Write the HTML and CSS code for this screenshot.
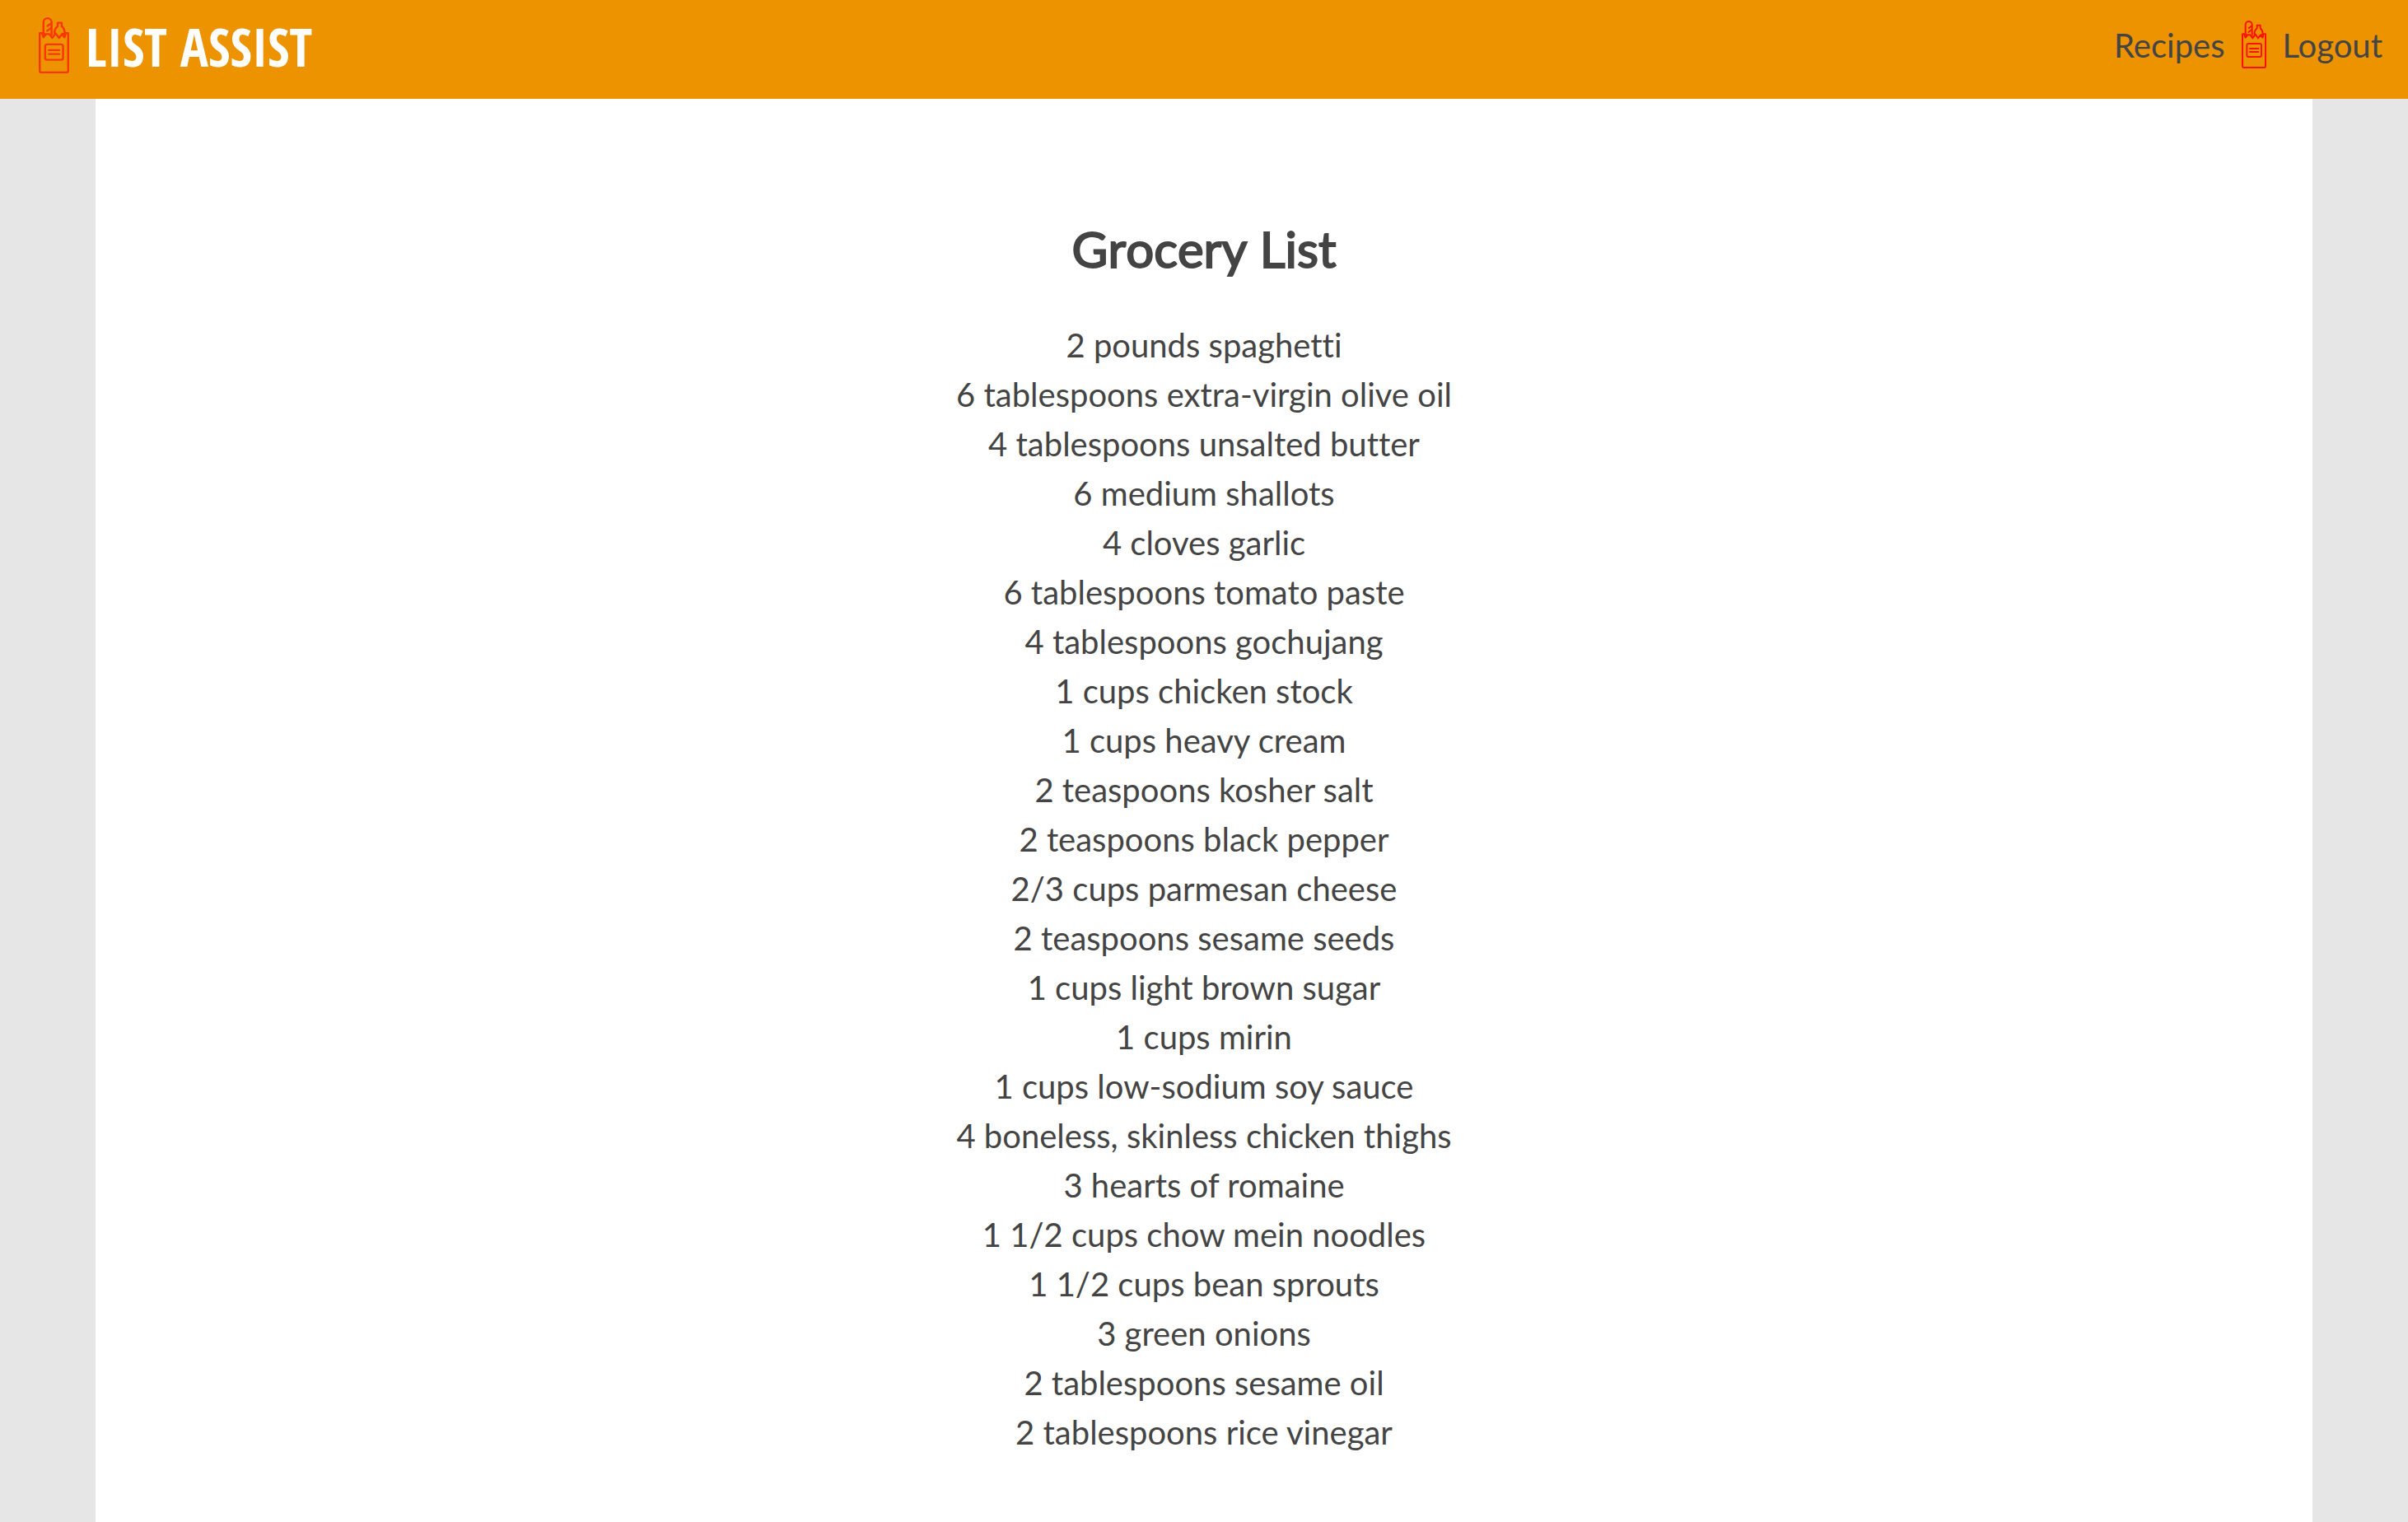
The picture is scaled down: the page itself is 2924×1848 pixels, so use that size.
FILE: index.html
```html
<!DOCTYPE html>
<html lang="en">
<head>
<meta charset="utf-8">
<title>List Assist</title>
<link rel="stylesheet" href="styles.css">
</head>
<body>
<svg class="sprite" aria-hidden="true">
  <symbol id="bag" viewBox="0 0 90 174" preserveAspectRatio="none">
    <g fill="none" stroke="currentColor" stroke-width="6" stroke-linejoin="round" stroke-linecap="round">
      <path d="M14 50V15a12 12 0 0 1 24 0V54"/>
      <path d="M26 27L37 19M25 42L37 33"/>
      <path d="M56 28V17H68V28M56 28C48 34 46 42 47 50M68 28C76 34 77 42 77 50"/>
      <path d="M3 49V167a4 4 0 0 0 4 4H83a4 4 0 0 0 4-4V49H79L76 62L69 52L60 64L50 50L40 64L31 52L22 52L14 62L10 49Z"/>
      <path d="M11 51H17L14 60ZM73 51H79L76 60Z"/>
      <rect x="19" y="84" width="53" height="48" rx="6"/>
      <path d="M30 102H61M30 114H61"/>
    </g>
  </symbol>
</svg>
<header class="header">
  <a class="brand" href="#">
    <svg class="brand-icon" aria-hidden="true"><use href="#bag"/></svg>
    <span class="brand-name">LIST ASSIST</span>
  </a>
  <nav class="nav">
    <a href="#">Recipes</a>
    <svg class="nav-icon" aria-hidden="true"><use href="#bag"/></svg>
    <a href="#">Logout</a>
  </nav>
</header>
<main class="content">
  <h1 class="title">Grocery List</h1>
  <ul class="list">
    <li>2 pounds spaghetti</li>
    <li>6 tablespoons extra-virgin olive oil</li>
    <li>4 tablespoons unsalted butter</li>
    <li>6 medium shallots</li>
    <li>4 cloves garlic</li>
    <li>6 tablespoons tomato paste</li>
    <li>4 tablespoons gochujang</li>
    <li>1 cups chicken stock</li>
    <li>1 cups heavy cream</li>
    <li>2 teaspoons kosher salt</li>
    <li>2 teaspoons black pepper</li>
    <li>2/3 cups parmesan cheese</li>
    <li>2 teaspoons sesame seeds</li>
    <li>1 cups light brown sugar</li>
    <li>1 cups mirin</li>
    <li>1 cups low-sodium soy sauce</li>
    <li>4 boneless, skinless chicken thighs</li>
    <li>3 hearts of romaine</li>
    <li>1 1/2 cups chow mein noodles</li>
    <li>1 1/2 cups bean sprouts</li>
    <li>3 green onions</li>
    <li>2 tablespoons sesame oil</li>
    <li>2 tablespoons rice vinegar</li>
  </ul>
</main>
</body>
</html>
```
FILE: styles.css
```css
* {
  box-sizing: border-box;
}

body {
  display: flex;
  flex-direction: column;
  min-height: 100vh;
  margin: 0;
  background: #e6e6e6;
  color: #444;
  font-family: Lato, sans-serif;
  font-size: 40px;
  font-variant-ligatures: none;
  line-height: 60px;
}

a {
  color: inherit;
  text-decoration: none;
}

.sprite {
  position: absolute;
  width: 0;
  height: 0;
}

.header {
  display: flex;
  justify-content: space-between;
  align-items: flex-start;
  height: 120px;
  padding: 21px 31px 0 47px;
  background: #ed9300;
}

.brand {
  display: flex;
  gap: 20px;
  color: #fff;
}

.brand-icon {
  width: 37px;
  height: 68px;
  color: #f83800;
}

.brand-name {
  padding-top: 6px;
  font-family: "Open Sans Condensed", "Roboto Condensed", sans-serif;
  font-size: 64px;
  font-weight: 700;
}

.nav {
  display: flex;
  gap: 20px;
  padding-top: 4px;
}

.nav-icon {
  width: 30px;
  height: 58px;
  color: #fa1400;
}

.content {
  flex: 1;
  margin: 0 116px;
  padding: 138px 40px 60px;
  background: #fff;
  text-align: center;
}

.title {
  margin: 0 0 43px;
  font-size: 60px;
  font-weight: 400;
  font-kerning: none;
  line-height: 88px;
  -webkit-text-stroke: 2px currentColor;
}

.list {
  margin: 0;
  padding: 0;
  list-style: none;
}
```
